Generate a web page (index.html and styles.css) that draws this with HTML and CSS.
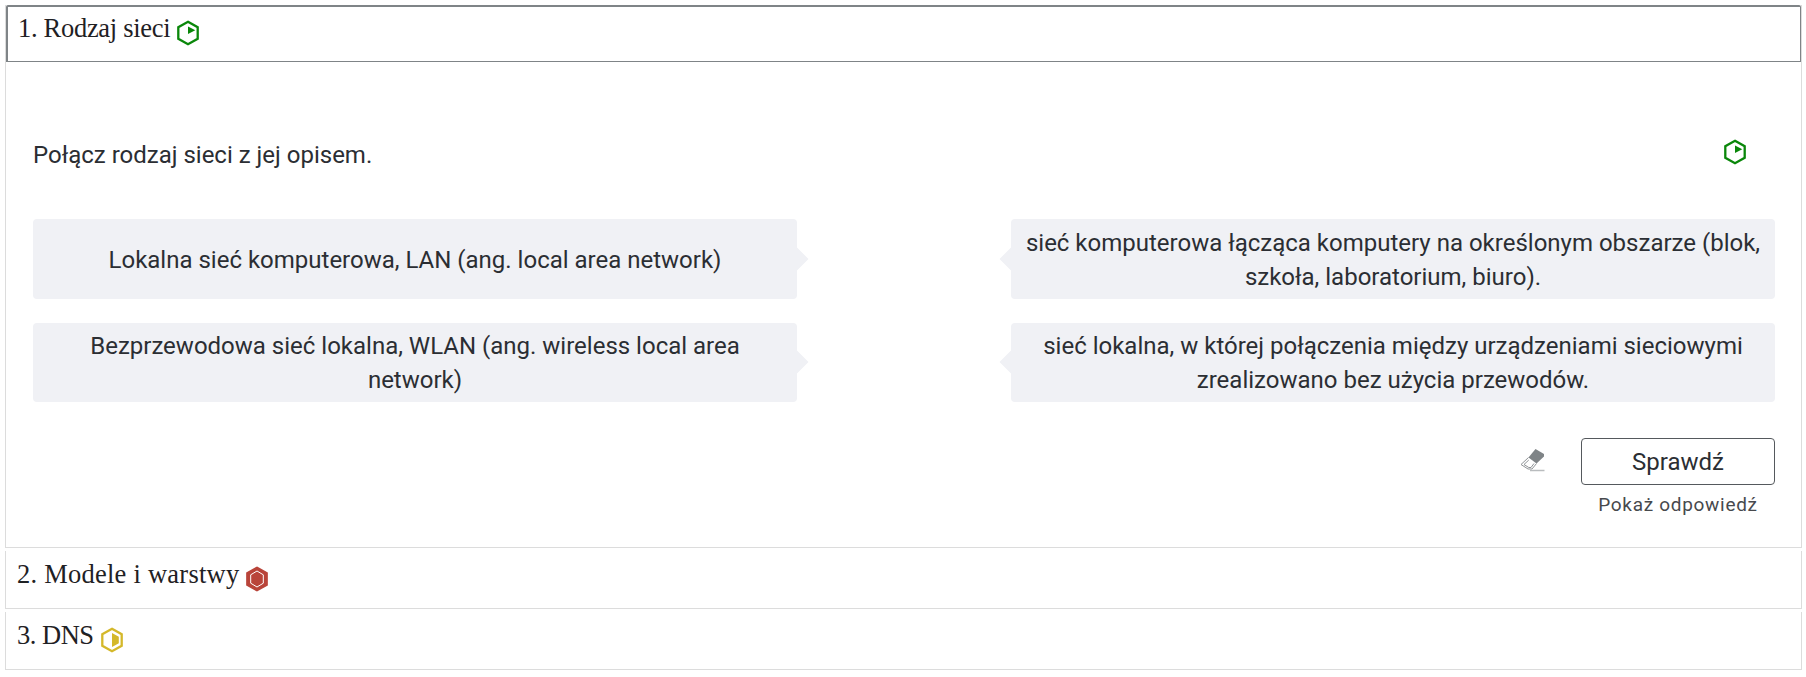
FILE: index.html
```html
<!DOCTYPE html>
<html lang="pl">
<head>
<meta charset="utf-8">
<title>Sieci</title>
<link rel="stylesheet" href="styles.css">
</head>
<body>
<svg class="defs" width="0" height="0" aria-hidden="true">
  <defs>
    <path id="hex" d="M12 1.700 21.700 7.200V18.800L12 24.300 2.300 18.800V7.200z"/>
  </defs>
</svg>
<main class="list">
  <section class="item item-open">
    <h2 class="head head-active">1. Rodzaj sieci
      <svg class="hex hex-green" viewBox="0 0 24 26"><use href="#hex" class="hex-line"/><path class="hex-play" d="M12 6.500V14L19.300 10.200z"/></svg>
    </h2>
    <div class="body">
      <div class="task">
        <p class="prompt">Połącz rodzaj sieci z jej opisem.</p>
        <svg class="hex hex-green hex-task" viewBox="0 0 24 26"><use href="#hex" class="hex-line"/><path class="hex-play" d="M12 6.500V14L19.300 10.200z"/></svg>
      </div>
      <div class="pairs">
        <div class="card card-left">Lokalna sieć komputerowa, LAN (ang. local area network)</div>
        <div class="card card-right">sieć komputerowa łącząca komputery na określonym obszarze (blok, szkoła, laboratorium, biuro).</div>
        <div class="card card-left">Bezprzewodowa sieć lokalna, WLAN (ang. wireless local area network)</div>
        <div class="card card-right">sieć lokalna, w której połączenia między urządzeniami sieciowymi zrealizowano bez użycia przewodów.</div>
      </div>
      <div class="actions">
        <svg class="eraser" viewBox="0 0 25 24">
          <path class="eraser-fill" d="M15.500 1 24 6 24 8.500 16.500 15.500 8.500 9.500z"/>
          <path class="eraser-line" d="M8.500 9.500 1 16.500 8 21H12L16.500 15.500"/>
          <path class="eraser-line" d="M8.800 12 4 16.500 8.800 19.500H11L14 15.500"/>
          <path class="eraser-base" d="M10 22.500H24.500"/>
        </svg>
        <div class="check">
          <button class="btn" type="button">Sprawdź</button>
          <a class="show">Pokaż odpowiedź</a>
        </div>
      </div>
    </div>
  </section>
  <section class="item">
    <h2 class="head head-models">2. Modele i warstwy
      <svg class="hex hex-red" viewBox="0 0 24 26"><use href="#hex" class="hex-solid"/><path class="hex-inner" d="M12 5 18.300 8.800V17.200L12 21 5.700 17.200V8.800z"/></svg>
    </h2>
  </section>
  <section class="item">
    <h2 class="head head-dns">3. DNS
      <svg class="hex hex-yellow" viewBox="0 0 24 26"><use href="#hex" class="hex-line"/><path class="hex-half" d="M12 6 18.800 9.800V16.200L12 20z"/></svg>
    </h2>
  </section>
</main>
</body>
</html>
```
FILE: styles.css
```css
* { box-sizing: border-box; }
html, body { margin: 0; background: #fff; }
body {
  padding: 5px 4px 0 5px;
  font-family: Roboto, sans-serif;
  color: #2b2e33;
}
.defs { position: absolute; }
.list { display: flex; flex-direction: column; gap: 3px; }
.item {
  border-left: 1px solid #dcdcdc;
  border-right: 1px solid #dcdcdc;
  border-bottom: 1px solid #dcdcdc;
}
.head {
  display: flex;
  align-items: center;
  gap: 6px;
  height: 57px;
  margin: 0;
  padding: 0 0 10px 11px;
  font-family: "Liberation Serif", serif;
  font-size: 26.500px;
  font-weight: 400;
  color: #1f2124;
}
.head-active {
  border-top: 2px solid #7f8487;
  border-left: 2px solid #7f8487;
  border-right: 1px solid #7f8487;
  border-bottom: 1px solid #7f8487;
  border-radius: 2px 2px 0 0;
  padding-bottom: 11px;
  padding-left: 10px;
  letter-spacing: -0.3px;
}
.head-models { letter-spacing: 0.24px; }
.head-dns { letter-spacing: -0.5px; }
.hex { width: 24px; height: 26px; flex: none; margin-top: 8px; }
.hex-line { fill: none; stroke-width: 2.300; }
.hex-green .hex-line { stroke: #0a870a; }
.hex-play { fill: #0a870a; }
.hex-task { margin: 0; }
.hex-red .hex-solid { fill: #b9443a; stroke: #b9443a; stroke-width: 2.300; }
.hex-inner { fill: #b9443a; stroke: #fff; stroke-width: 1; }
.hex-yellow .hex-line { stroke: #d4b82a; }
.hex-half { fill: #d4b82a; }
.body { padding: 0 26px 0 27px; height: 485px; }
.task {
  display: flex;
  align-items: flex-start;
  justify-content: space-between;
  height: 157px;
  padding: 77px 28px 0 0;
}
.prompt { margin: 1px 0 0; font-size: 24px; line-height: 30px; }
.pairs {
  display: grid;
  grid-template-columns: 764px 764px;
  justify-content: space-between;
  row-gap: 24px;
}
.card {
  position: relative;
  display: flex;
  align-items: center;
  justify-content: center;
  height: 79.500px;
  padding: 2px 12px 0;
  background: #f0f1f5;
  border-radius: 4px;
  font-size: 24px;
  line-height: 34px;
  text-align: center;
}
.card::after {
  content: "";
  position: absolute;
  top: 50%;
  width: 17px;
  height: 17px;
  background: #f0f1f5;
  transform: translateY(-50%) rotate(45deg);
}
.card-left::after { right: -8px; }
.card-right::after { left: -8px; }
.actions {
  display: flex;
  justify-content: flex-end;
  align-items: flex-start;
  gap: 36px;
  padding-top: 36px;
}
.eraser { width: 25px; height: 24px; margin-top: 10px; }
.eraser-fill { fill: #7f8487; }
.eraser-line { fill: none; stroke: #8f9396; stroke-width: 1; }
.eraser-base { fill: none; stroke: #b9bcbe; stroke-width: 1.500; }
.check { display: flex; flex-direction: column; align-items: center; width: 194px; }
.btn {
  width: 194px;
  height: 47px;
  padding: 0;
  background: #fff;
  border: 1px solid #55595d;
  border-radius: 4px;
  font: 400 24px Roboto, sans-serif;
  color: #2b2e33;
}
.show {
  margin-top: 7px;
  font-size: 19px;
  line-height: 26px;
  letter-spacing: 0.7px;
  color: #47494d;
}
```
